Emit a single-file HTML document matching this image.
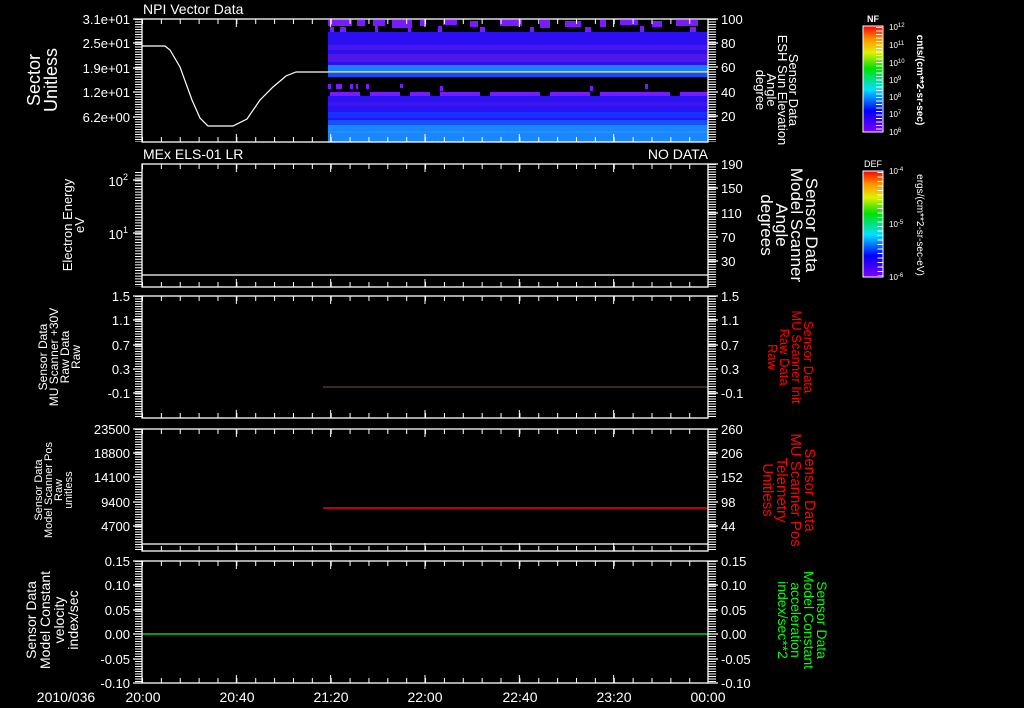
<!DOCTYPE html>
<html><head><meta charset="utf-8"><style>
html,body{margin:0;padding:0;background:#000;}
svg{display:block;font-family:"Liberation Sans",sans-serif;}
text{fill:#fff;}
text.r{fill:#f00;}
text.g{fill:#0f0;}
</style></head><body>
<svg width="1024" height="708" viewBox="0 0 1024 708" xmlns="http://www.w3.org/2000/svg">
<defs>
<linearGradient id="rb" x1="0" y1="1" x2="0" y2="0">
<stop offset="0" stop-color="#8000ff"/>
<stop offset="0.2" stop-color="#0000ff"/>
<stop offset="0.4" stop-color="#00e0ff"/>
<stop offset="0.6" stop-color="#00e000"/>
<stop offset="0.75" stop-color="#e0f000"/>
<stop offset="0.88" stop-color="#ff9000"/>
<stop offset="1" stop-color="#ff0000"/>
</linearGradient>
</defs>
<rect width="1024" height="708" fill="#000"/>

<g>
<rect x="328" y="20" width="380" height="12" fill="#000"/>
<g fill="#7a1aff">
<rect x="328" y="20" width="24" height="6"/><rect x="357" y="20" width="8" height="6"/><rect x="373" y="20" width="12" height="6"/><rect x="392" y="20" width="20" height="8"/><rect x="420" y="20" width="6" height="6"/><rect x="443" y="20" width="14" height="5"/><rect x="470" y="21" width="8" height="6"/><rect x="500" y="20" width="22" height="6"/><rect x="540" y="20" width="10" height="8"/><rect x="565" y="21" width="16" height="6"/><rect x="600" y="20" width="6" height="7"/><rect x="620" y="20" width="18" height="5"/><rect x="652" y="21" width="10" height="6"/><rect x="676" y="20" width="22" height="6"/>
<rect x="330" y="27" width="4" height="5"/><rect x="340" y="27" width="6" height="5"/><rect x="375" y="26" width="3" height="6"/><rect x="408" y="27" width="3" height="5"/><rect x="438" y="26" width="4" height="6"/><rect x="480" y="27" width="5" height="5"/><rect x="530" y="27" width="4" height="5"/><rect x="585" y="27" width="6" height="5"/><rect x="640" y="26" width="4" height="6"/><rect x="690" y="27" width="6" height="5"/>
</g>
<rect x="328" y="32" width="380" height="33" fill="#2a10f0"/>
<rect x="328" y="45" width="380" height="5" fill="#4a16ee"/>
<rect x="328" y="54" width="380" height="8" fill="#5018e8"/>
<rect x="328" y="65" width="380" height="7" fill="#1a80ff"/>
<rect x="328" y="73" width="380" height="4" fill="#1050ff"/>
<g fill="#7a1aff">
<rect x="328" y="84" width="3" height="5"/><rect x="336" y="84" width="6" height="5"/><rect x="350" y="84" width="3" height="5"/><rect x="356" y="84" width="2" height="5"/><rect x="366" y="84" width="3" height="5"/><rect x="400" y="84" width="3" height="4"/><rect x="440" y="86" width="3" height="5"/><rect x="590" y="86" width="3" height="5"/><rect x="645" y="84" width="3" height="5"/>
<rect x="330" y="92" width="30" height="5"/><rect x="370" y="92" width="30" height="5"/><rect x="410" y="92" width="20" height="5"/><rect x="440" y="92" width="40" height="5"/><rect x="490" y="92" width="50" height="5"/><rect x="550" y="92" width="40" height="5"/><rect x="600" y="92" width="70" height="5"/><rect x="680" y="92" width="28" height="5"/>
</g>
<rect x="328" y="96" width="380" height="30" fill="#2a12f4"/>
<rect x="328" y="102" width="380" height="4" fill="#4016f0"/>
<rect x="328" y="112" width="380" height="6" fill="#1830ff"/>
<rect x="328" y="120" width="380" height="5" fill="#1450ff"/>
<rect x="328" y="125" width="380" height="17" fill="#1a86ff"/>
<rect x="328" y="131" width="380" height="2" fill="#2090ff"/>
</g>
<polyline fill="none" stroke="#fff" stroke-width="1.2" points="142,46 165,46 170,50 180,67 192,100 200,118 208,126 233,126 247,119 260,100 273,87 286,76 296,72 708,72"/>

<line x1="142" y1="275" x2="708" y2="275" stroke="#fff" stroke-width="1.2"/>
<line x1="323" y1="387" x2="708" y2="387" stroke="#7a5050" stroke-width="1"/>
<line x1="323" y1="508" x2="708" y2="508" stroke="#ff0000" stroke-width="1.5"/>
<line x1="142" y1="634" x2="708" y2="634" stroke="#00ff00" stroke-width="1.2"/>

<g stroke="#fff" fill="none">
<g>
<rect x="142" y="19" width="566" height="123" stroke-width="1.3"/>
<line x1="138.5" y1="19" x2="138.5" y2="142" stroke-width="7" stroke-dasharray="1 1.5"/>
<line x1="712" y1="19" x2="712" y2="142" stroke-width="8" stroke-dasharray="1 1.5"/>
<line x1="142" y1="21.5" x2="708" y2="21.5" stroke-width="5" stroke-dasharray="1 17.87"/>
<line x1="142" y1="139.5" x2="708" y2="139.5" stroke-width="5" stroke-dasharray="1 17.87"/>
<line x1="141.5" y1="23" x2="709" y2="23" stroke-width="8" stroke-dasharray="1 93.33"/>
<line x1="141.5" y1="138" x2="709" y2="138" stroke-width="8" stroke-dasharray="1 93.33"/>
</g>
<g>
<rect x="142" y="164" width="566" height="123" stroke-width="1.3"/>
<line x1="138.5" y1="172" x2="138.5" y2="287" stroke-width="7" stroke-dasharray="1 1.8"/>
<line x1="712" y1="164" x2="712" y2="287" stroke-width="8" stroke-dasharray="1 1.5"/>
<line x1="142" y1="166.5" x2="708" y2="166.5" stroke-width="5" stroke-dasharray="1 17.87"/>
<line x1="142" y1="284.5" x2="708" y2="284.5" stroke-width="5" stroke-dasharray="1 17.87"/>
<line x1="141.5" y1="168" x2="709" y2="168" stroke-width="8" stroke-dasharray="1 93.33"/>
<line x1="141.5" y1="283" x2="709" y2="283" stroke-width="8" stroke-dasharray="1 93.33"/>
</g>
<g>
<rect x="142" y="296" width="566" height="122" stroke-width="1.3"/>
<line x1="138.5" y1="296" x2="138.5" y2="418" stroke-width="7" stroke-dasharray="1 1.5"/>
<line x1="712" y1="296" x2="712" y2="418" stroke-width="8" stroke-dasharray="1 1.5"/>
<line x1="142" y1="298.5" x2="708" y2="298.5" stroke-width="5" stroke-dasharray="1 17.87"/>
<line x1="142" y1="415.5" x2="708" y2="415.5" stroke-width="5" stroke-dasharray="1 17.87"/>
<line x1="141.5" y1="300" x2="709" y2="300" stroke-width="8" stroke-dasharray="1 93.33"/>
<line x1="141.5" y1="414" x2="709" y2="414" stroke-width="8" stroke-dasharray="1 93.33"/>
</g>
<g>
<rect x="142" y="429" width="566" height="122" stroke-width="1.3"/>
<line x1="142" y1="544" x2="708" y2="544" stroke-width="1.2"/>
<line x1="138.5" y1="429" x2="138.5" y2="551" stroke-width="7" stroke-dasharray="1 1.5"/>
<line x1="712" y1="429" x2="712" y2="551" stroke-width="8" stroke-dasharray="1 1.5"/>
<line x1="142" y1="431.5" x2="708" y2="431.5" stroke-width="5" stroke-dasharray="1 17.87"/>
<line x1="142" y1="548.5" x2="708" y2="548.5" stroke-width="5" stroke-dasharray="1 17.87"/>
<line x1="141.5" y1="433" x2="709" y2="433" stroke-width="8" stroke-dasharray="1 93.33"/>
<line x1="141.5" y1="547" x2="709" y2="547" stroke-width="8" stroke-dasharray="1 93.33"/>
</g>
<g>
<rect x="142" y="561" width="566" height="122" stroke-width="1.3"/>
<line x1="138.5" y1="561" x2="138.5" y2="683" stroke-width="7" stroke-dasharray="1 1.5"/>
<line x1="712" y1="561" x2="712" y2="683" stroke-width="8" stroke-dasharray="1 1.5"/>
<line x1="142" y1="563.5" x2="708" y2="563.5" stroke-width="5" stroke-dasharray="1 17.87"/>
<line x1="142" y1="680.5" x2="708" y2="680.5" stroke-width="5" stroke-dasharray="1 17.87"/>
<line x1="141.5" y1="565" x2="709" y2="565" stroke-width="8" stroke-dasharray="1 93.33"/>
<line x1="141.5" y1="679" x2="709" y2="679" stroke-width="8" stroke-dasharray="1 93.33"/>
</g>
<path stroke-width="1.3" d="M133 19H142M133 43H142M133 68H142M133 92H142M133 117H142
M708 19H718M708 43H718M708 67H718M708 92H718M708 116H718
M133 180H142M133 233H142
M708 164H718M708 188H718M708 213H718M708 237H718M708 261H718
M133 296H142M133 320H142M133 345H142M133 369H142M133 393H142
M708 296H718M708 320H718M708 345H718M708 369H718M708 393H718
M133 429H142M133 453H142M133 477H142M133 502H142M133 526H142
M708 429H718M708 453H718M708 477H718M708 502H718M708 526H718
M133 561H142M133 585H142M133 610H142M133 634H142M133 659H142M133 683H142
M708 561H718M708 585H718M708 610H718M708 634H718M708 659H718M708 683H718"/>
</g>

<g font-size="13" text-anchor="end">
<text x="130" y="24">3.1e+01</text><text x="130" y="48">2.5e+01</text><text x="130" y="73">1.9e+01</text><text x="130" y="97">1.2e+01</text><text x="130" y="122">6.2e+00</text>
<text x="128" y="186">10<tspan font-size="9" dy="-6">2</tspan></text><text x="128" y="239">10<tspan font-size="9" dy="-6">1</tspan></text>
<text x="130" y="301">1.5</text><text x="130" y="325">1.1</text><text x="130" y="350">0.7</text><text x="130" y="374">0.3</text><text x="130" y="398">-0.1</text>
<text x="130" y="434">23500</text><text x="130" y="458">18800</text><text x="130" y="482">14100</text><text x="130" y="507">9400</text><text x="130" y="531">4700</text>
<text x="130" y="566">0.15</text><text x="130" y="590">0.10</text><text x="130" y="615">0.05</text><text x="130" y="639">0.00</text><text x="130" y="664">-0.05</text><text x="130" y="688">-0.10</text>
</g>
<g font-size="13" text-anchor="start">
<text x="721" y="24">100</text><text x="721" y="48">80</text><text x="721" y="72">60</text><text x="721" y="97">40</text><text x="721" y="121">20</text>
<text x="721" y="169">190</text><text x="721" y="193">150</text><text x="721" y="218">110</text><text x="721" y="242">70</text><text x="721" y="266">30</text>
<text x="721" y="301">1.5</text><text x="721" y="325">1.1</text><text x="721" y="350">0.7</text><text x="721" y="374">0.3</text><text x="721" y="398">-0.1</text>
<text x="721" y="434">260</text><text x="721" y="458">206</text><text x="721" y="482">152</text><text x="721" y="507">98</text><text x="721" y="531">44</text>
<text x="721" y="566">0.15</text><text x="721" y="590">0.10</text><text x="721" y="615">0.05</text><text x="721" y="639">0.00</text><text x="721" y="664">-0.05</text><text x="721" y="688">-0.10</text>
</g>

<g font-size="14">
<text x="143" y="14">NPI Vector Data</text>
<text x="143" y="159">MEx ELS-01 LR</text>
<text x="708" y="159" text-anchor="end">NO DATA</text>
</g>
<g font-size="14" text-anchor="middle">
<text x="66" y="702">2010/036</text>
<text x="143" y="702">20:00</text><text x="237" y="702">20:40</text><text x="331" y="702">21:20</text><text x="425" y="702">22:00</text><text x="520" y="702">22:40</text><text x="614" y="702">23:20</text><text x="708" y="702">00:00</text>
</g>

<g text-anchor="middle">
<g transform="translate(40,80) rotate(-90)" font-size="18"><text y="0">Sector</text><text y="17">Unitless</text></g>
<g transform="translate(72,225) rotate(-90)" font-size="13"><text y="0">Electron Energy</text><text y="12">eV</text></g>
<g transform="translate(47,357) rotate(-90)" font-size="12"><text y="0">Sensor Data</text><text y="11">MU Scanner +30V</text><text y="22">Raw Data</text><text y="33">Raw</text></g>
<g transform="translate(42,490) rotate(-90)" font-size="11"><text y="0">Sensor Data</text><text y="10">Model Scanner Pos</text><text y="20">Raw</text><text y="30">unitless</text></g>
<g transform="translate(36,620) rotate(-90)" font-size="14"><text y="0">Sensor Data</text><text y="14">Model Constant</text><text y="28">velocity</text><text y="42">index/sec</text></g>
</g>
<g text-anchor="middle">
<g transform="translate(789,90) rotate(90)" font-size="13"><text y="0">Sensor Data</text><text y="11">ESH Sun Elevation</text><text y="22">Angle</text><text y="33">degree</text></g>
<g transform="translate(806,225) rotate(90)" font-size="17"><text y="0">Sensor Data</text><text y="15">Model Scanner</text><text y="30">Angle</text><text y="45">degrees</text></g>
<g transform="translate(804,357) rotate(90)" font-size="13"><text class="r" y="0">Sensor Data</text><text class="r" y="12">MU Scanner Init</text><text class="r" y="24">Raw Data</text><text class="r" y="36">Raw</text></g>
<g transform="translate(805,490) rotate(90)" font-size="15"><text class="r" y="0">Sensor Data</text><text class="r" y="14">MU Scanner Pos</text><text class="r" y="28">Telemetry</text><text class="r" y="42">Unitless</text></g>
<g transform="translate(817,620) rotate(90)" font-size="14"><text class="g" y="0">Sensor Data</text><text class="g" y="13">Model Constant</text><text class="g" y="26">acceleration</text><text class="g" y="39">index/sec**2</text></g>
</g>

<rect x="863" y="26" width="20" height="106" fill="url(#rb)" stroke="#fff" stroke-width="1"/>
<line x1="879" y1="27" x2="879" y2="131" stroke="#fff" stroke-width="6" stroke-dasharray="1 2.5"/>
<text x="873" y="22" font-size="9" text-anchor="middle" font-weight="bold">NF</text>
<g font-size="8"><text x="889" y="30">10<tspan font-size="6" dy="-3">12</tspan></text><text x="889" y="48">10<tspan font-size="6" dy="-3">11</tspan></text><text x="889" y="66">10<tspan font-size="6" dy="-3">10</tspan></text><text x="889" y="83">10<tspan font-size="6" dy="-3">9</tspan></text><text x="889" y="100">10<tspan font-size="6" dy="-3">8</tspan></text><text x="889" y="117">10<tspan font-size="6" dy="-3">7</tspan></text><text x="889" y="135">10<tspan font-size="6" dy="-3">6</tspan></text></g>
<g transform="translate(917,80) rotate(90)" font-size="10" font-weight="bold" text-anchor="middle"><text>cnts/(cm**2-sr-sec)</text></g>

<rect x="863" y="171" width="20" height="106" fill="url(#rb)" stroke="#fff" stroke-width="1"/>
<line x1="880" y1="172" x2="880" y2="276" stroke="#fff" stroke-width="5" stroke-dasharray="1 3.5"/>
<text x="873" y="167" font-size="9" text-anchor="middle">DEF</text>
<g font-size="8"><text x="889" y="174">10<tspan font-size="6" dy="-3">-4</tspan></text><text x="889" y="227">10<tspan font-size="6" dy="-3">-5</tspan></text><text x="889" y="280">10<tspan font-size="6" dy="-3">-6</tspan></text></g>
<g transform="translate(917,225) rotate(90)" font-size="10" text-anchor="middle"><text>ergs/(cm**2-sr-sec-eV)</text></g>
</svg>
</body></html>
